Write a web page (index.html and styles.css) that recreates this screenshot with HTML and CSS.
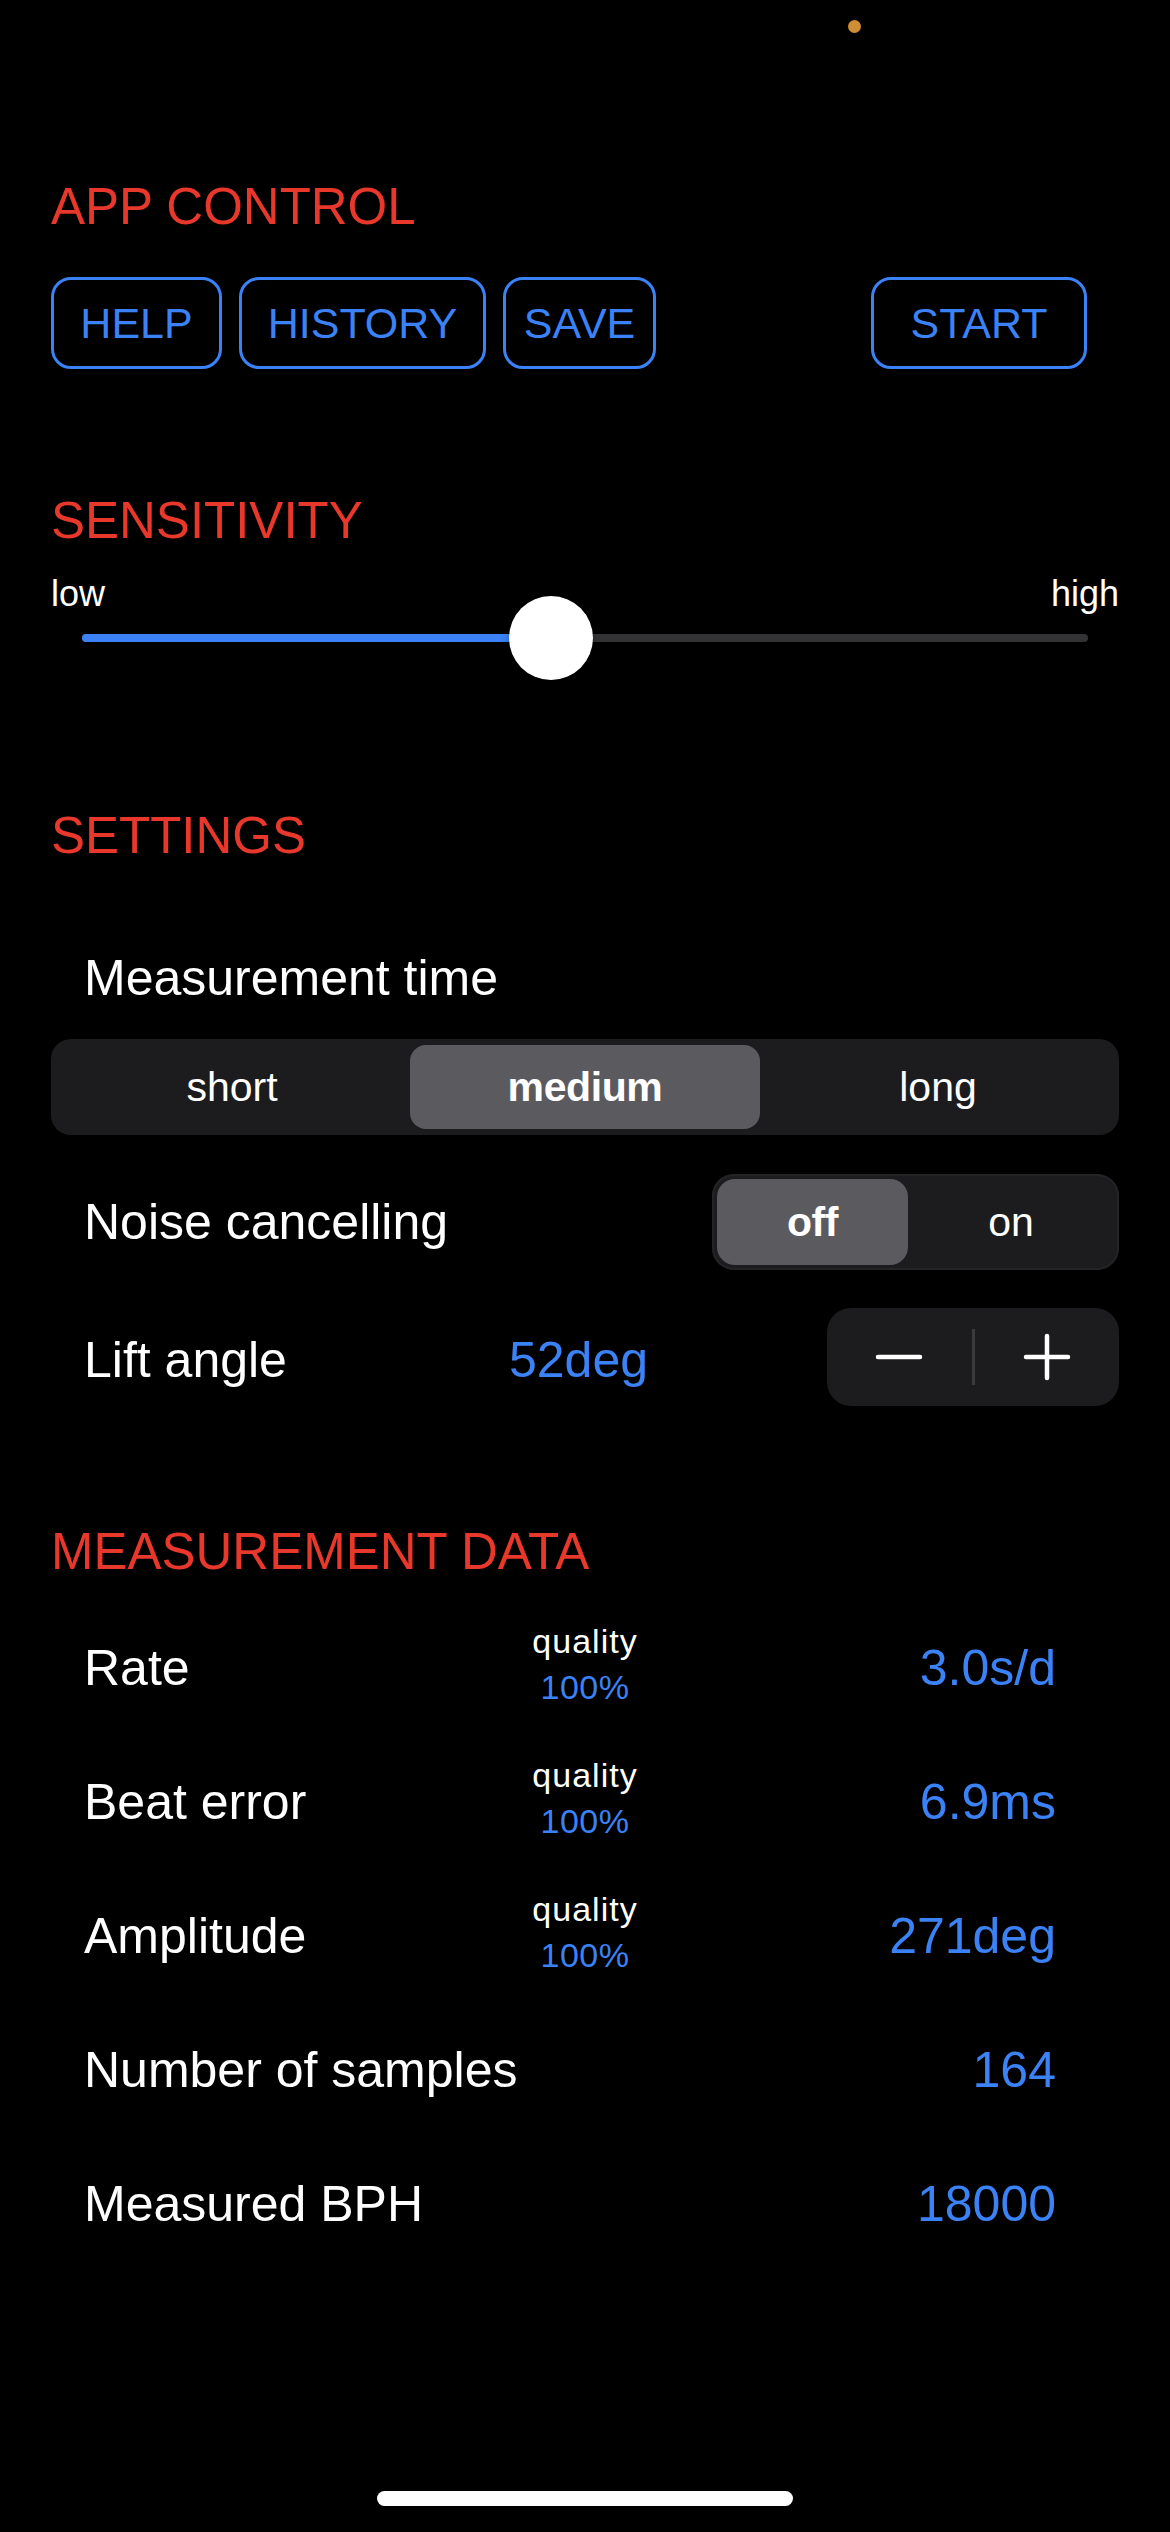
FILE: index.html
```html
<!DOCTYPE html>
<html lang="en">
<head>
  <meta charset="UTF-8">
  <title>Timegrapher</title>
  <link rel="stylesheet" href="styles.css">
</head>
<body>
  <div class="status-dot"></div>
  <main class="page">
    <section class="section section-app">
      <h2 class="section-title">APP CONTROL</h2>
      <div class="button-row">
        <button class="btn btn-help">HELP</button>
        <button class="btn btn-history">HISTORY</button>
        <button class="btn btn-save">SAVE</button>
        <button class="btn btn-start">START</button>
      </div>
    </section>

    <section class="section section-sensitivity">
      <h2 class="section-title">SENSITIVITY</h2>
      <div class="slider-labels">
        <span>low</span>
        <span>high</span>
      </div>
      <div class="slider">
        <div class="slider-track">
          <div class="slider-fill" style="width:46.6%"></div>
        </div>
        <div class="slider-thumb" style="left:46.6%"></div>
      </div>
    </section>

    <section class="section section-settings">
      <h2 class="section-title">SETTINGS</h2>
      <div class="setting-label setting-label-top">Measurement time</div>
      <div class="segmented segmented-time">
        <div class="segment">short</div>
        <div class="segment selected">medium</div>
        <div class="segment">long</div>
      </div>

      <div class="setting-row noise-row">
        <div class="setting-label">Noise cancelling</div>
        <div class="segmented segmented-noise">
          <div class="segment selected">off</div>
          <div class="segment">on</div>
        </div>
      </div>

      <div class="setting-row lift-row">
        <div class="setting-label">Lift angle</div>
        <div class="value lift-value">52deg</div>
        <div class="stepper">
          <button class="stepper-btn">
            <svg width="48" height="48" viewBox="0 0 48 48"><line x1="3" y1="24" x2="45" y2="24" stroke="#fff" stroke-width="4.5" stroke-linecap="round"/></svg>
          </button>
          <span class="stepper-divider"></span>
          <button class="stepper-btn">
            <svg width="48" height="48" viewBox="0 0 48 48"><line x1="3" y1="24" x2="45" y2="24" stroke="#fff" stroke-width="4.5" stroke-linecap="round"/><line x1="24" y1="3" x2="24" y2="45" stroke="#fff" stroke-width="4.5" stroke-linecap="round"/></svg>
          </button>
        </div>
      </div>
    </section>

    <section class="section section-data">
      <h2 class="section-title">MEASUREMENT DATA</h2>
      <div class="data-list">
        <div class="data-row">
          <div class="data-label">Rate</div>
          <div class="quality"><span class="quality-title">quality</span><span class="quality-value">100%</span></div>
          <div class="value data-value">3.0s/d</div>
        </div>
        <div class="data-row">
          <div class="data-label">Beat error</div>
          <div class="quality"><span class="quality-title">quality</span><span class="quality-value">100%</span></div>
          <div class="value data-value">6.9ms</div>
        </div>
        <div class="data-row">
          <div class="data-label">Amplitude</div>
          <div class="quality"><span class="quality-title">quality</span><span class="quality-value">100%</span></div>
          <div class="value data-value">271deg</div>
        </div>
        <div class="data-row">
          <div class="data-label">Number of samples</div>
          <div></div>
          <div class="value data-value">164</div>
        </div>
        <div class="data-row">
          <div class="data-label">Measured BPH</div>
          <div></div>
          <div class="value data-value">18000</div>
        </div>
      </div>
    </section>

    <div class="home-indicator"></div>
  </main>
</body>
</html>
```

FILE: styles.css
```css
* {
  box-sizing: border-box;
}
body {
  margin: 0;
  background-color: #000;
  color: #fff;
  font-family: "Liberation Sans", Arial, sans-serif;
}
.status-dot {
  position: absolute;
  top: 20px;
  left: 848px;
  width: 13px;
  height: 13px;
  border-radius: 50%;
  background-color: #d08e34;
}
.page {
  padding: 177px 51px 24px;
}
.section-title {
  margin: 0;
  font-size: 51px;
  line-height: 60px;
  font-weight: normal;
  color: #e8372b;
}
.section-sensitivity {
  margin-top: 122px;
}
.section-settings {
  margin-top: 148px;
}
.section-data {
  margin-top: 116px;
}

/* app control */
.button-row {
  display: flex;
  gap: 17px;
  margin-top: 40px;
}
.btn {
  height: 92px;
  padding: 0;
  border: 3px solid #3b82f6;
  border-radius: 20px;
  background: none;
  color: #3b82f6;
  font-family: inherit;
  font-size: 43px;
  text-align: center;
}
.btn-help { width: 171px; }
.btn-history { width: 247px; }
.btn-save { width: 153px; }
.btn-start {
  width: 216px;
  margin-left: auto;
  margin-right: 32px;
}

/* sensitivity slider */
.slider-labels {
  display: flex;
  justify-content: space-between;
  margin-top: 25px;
  font-size: 36px;
  line-height: 36px;
}
.slider {
  position: relative;
  height: 40px;
  margin: 6px 31px 0;
  display: flex;
  align-items: center;
}
.slider-track {
  width: 100%;
  height: 8px;
  border-radius: 4px;
  background-color: #333336;
  overflow: hidden;
}
.slider-fill {
  height: 100%;
  background-color: #3b82f6;
}
.slider-thumb {
  position: absolute;
  top: 50%;
  width: 84px;
  height: 84px;
  border-radius: 50%;
  background-color: #fff;
  transform: translate(-50%, -50%);
  box-shadow: 0 3px 8px rgba(0,0,0,0.3);
}

/* settings */
.setting-label {
  font-size: 50px;
  line-height: 58px;
}
.setting-label-top {
  margin-top: 83px;
  padding-left: 33px;
}
.segmented {
  display: flex;
  background-color: #1c1c1e;
  font-size: 41px;
}
.segment {
  display: flex;
  align-items: center;
  justify-content: center;
  flex: 1;
}
.segment.selected {
  background-color: #5b5b5f;
  font-weight: bold;
  letter-spacing: -0.4px;
}
.segmented-time {
  height: 96px;
  margin-top: 32px;
  padding: 6px;
  border-radius: 20px;
}
.segmented-time .segment.selected {
  margin: 0 3px;
  border-radius: 16px;
}
.setting-row {
  display: grid;
  grid-template-columns: 1fr auto 1fr;
  align-items: center;
  padding-left: 33px;
}
.noise-row {
  grid-template-columns: 1fr auto;
  margin-top: 39px;
}
.segmented-noise {
  width: 407px;
  height: 96px;
  padding: 5px;
  border-radius: 22px;
  box-shadow: inset 0 0 0 2px #242426;
}
.segmented-noise .segment.selected {
  flex: 0 0 191px;
  border-radius: 18px;
}
.lift-row {
  margin-top: 38px;
}
.lift-row .setting-label {
  margin-top: 6px;
}
.value {
  color: #3b82f6;
  font-size: 50px;
  line-height: 58px;
}
.lift-value {
  margin-top: 6px;
  margin-right: 46px;
}
.stepper {
  justify-self: end;
  display: flex;
  align-items: center;
  width: 292px;
  height: 98px;
  border-radius: 24px;
  background-color: #1c1c1e;
}
.stepper-btn {
  flex: 1;
  height: 100%;
  padding: 0;
  border: none;
  background: none;
  display: flex;
  align-items: center;
  justify-content: center;
}
.stepper-divider {
  width: 3px;
  height: 56px;
  background-color: #3a3a3c;
}

/* measurement data */
.data-list {
  margin-top: 19px;
}
.data-row {
  display: grid;
  grid-template-columns: 1fr auto 1fr;
  align-items: center;
  height: 134px;
}
.data-label {
  padding-left: 33px;
  font-size: 50px;
  line-height: 58px;
}
.data-value {
  justify-self: end;
  padding-right: 63px;
}
.quality {
  display: flex;
  flex-direction: column;
  align-items: center;
  padding-bottom: 9px;
  font-size: 34px;
  line-height: 46px;
}
.quality-title {
  letter-spacing: 1px;
}
.quality-value {
  color: #3b82f6;
  letter-spacing: 0.5px;
}

.home-indicator {
  width: 416px;
  height: 15px;
  margin: 220px auto 0;
  border-radius: 8px;
  background-color: #fff;
}
```
